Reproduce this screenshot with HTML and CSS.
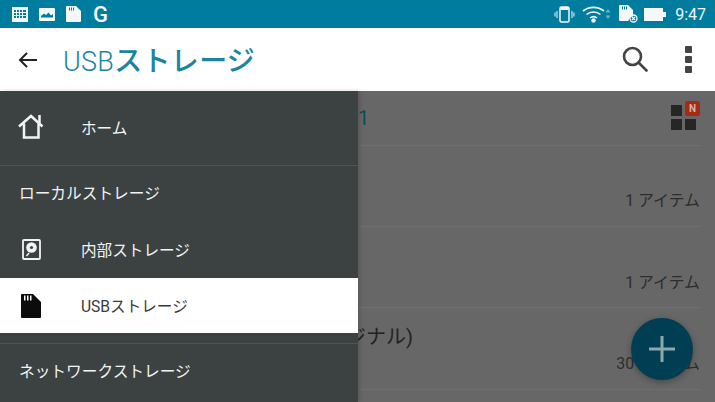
FILE: index.html
```html
<!DOCTYPE html>
<html lang="ja">
<head>
    <meta charset="UTF-8">
    <meta name="viewport" content="width=device-width, initial-scale=1.0">
    <title>USBストレージ</title>
    <link rel="stylesheet" href="styles.css">
</head>
<body>
    <div class="screen">
        <div class="status-bar">
            <div class="status-left">
                <svg width="16" height="16" viewBox="0 0 16 16"><path fill="#f4f8f9" fill-rule="evenodd" d="M0 1h16v15H0zM2 4v2h2V4zm3 0v2h2V4zm3 0v2h2V4zm3 0v2h3V4zM2 7v2h2V7zm3 0v2h2V7zm3 0v2h2V7zm3 0v2h3V7zM2 10v2h2v-2zm3 0v2h2v-2zm3 0v2h2v-2zm3 0v2h3v-2z"/></svg>
                <svg width="16" height="13" viewBox="0 0 16 13"><path fill="#f4f8f9" fill-rule="evenodd" d="M1 0h14a1 1 0 0 1 1 1v11a1 1 0 0 1-1 1H1a1 1 0 0 1-1-1V1a1 1 0 0 1 1-1zm1 9.500h12V6L12 7.500 9.500 4.500 7 7 5 5.500 2 8z"/></svg>
                <svg width="15" height="16" viewBox="0 0 15 16"><path fill="#f4f8f9" fill-rule="evenodd" d="M1 0h9l5 5v10a1 1 0 0 1-1 1H1a1 1 0 0 1-1-1V1a1 1 0 0 1 1-1zm2 1.500v3h1v-3zm2 0v3h1v-3zm2 0v3h1v-3z"/></svg>
                <span class="status-g">G</span>
            </div>
            <div class="status-right">
                <svg class="ic-phone" width="21" height="17" viewBox="0 0 20 17"><g fill="none" stroke="#f4f8f9"><rect x="5.500" y="1" width="9" height="15" rx="1.500" stroke-width="1.500"/><path d="M2.500 5v7M.5 6.500v4M17.500 5v7M19.500 6.500v4"/></g><path fill="#f4f8f9" d="M6 1h8v3H6z"/></svg>
                <svg class="ic-wifi" width="29" height="18" viewBox="0 0 29 18"><g fill="none" stroke="#f4f8f9" stroke-width="1.600"><path d="M1 6a17 17 0 0 1 21 0"/><path d="M4.500 9.500a11 11 0 0 1 14 0"/><path d="M8 13a5.500 5.500 0 0 1 7 0"/></g><circle cx="11.500" cy="15.500" r="2.200" fill="#f4f8f9"/><path fill="#6fb2c6" d="M26 4l2.500 3.500h-5zM26 14l-2.500-3.500h5z"/></svg>
                <svg class="ic-sd" width="20" height="18" viewBox="0 0 20 18"><path fill="#f4f8f9" fill-rule="evenodd" d="M1 0h8l5 5v6.500A5 5 0 0 0 9.500 16H1a1 1 0 0 1-1-1V1a1 1 0 0 1 1-1zm2 1.500v3h1v-3zm2 0v3h1v-3zm2 0v3h1v-3z"/><circle cx="14.500" cy="13.500" r="3.500" fill="none" stroke="#f4f8f9" stroke-width="1.300"/><path stroke="#f4f8f9" stroke-width="1.200" d="M13 12l3 3m0-3l-3 3"/></svg>
                <svg class="ic-battery" width="22" height="13" viewBox="0 0 22 13"><path fill="#f4f8f9" d="M0 0h19v13H0zM19 4h3v5h-3z"/></svg>
                <span class="clock">9:47</span>
            </div>
        </div>

        <header class="app-bar">
            <svg class="back" width="20" height="18" viewBox="0 0 20 18"><path fill="none" stroke="#222" stroke-width="2" d="M19 9H2M9 2L2 9l7 7"/></svg>
            <h1 class="title"><span class="title-latin">USB</span>ストレージ</h1>
            <svg class="search" width="26" height="26" viewBox="0 0 26 26"><g fill="none" stroke="#444" stroke-width="2.600"><circle cx="10.500" cy="10.500" r="8.500"/><path d="M16.500 16.500L24.500 24.500" stroke-linecap="round"/></g></svg>
            <div class="more"><i></i><i></i><i></i></div>
        </header>

        <main class="content">
            <div class="path-row">
                <span class="path-name">1</span>
                <div class="view-icon">
                    <i></i><b>N</b><i></i><i></i>
                </div>
            </div>
            <div class="file-row"><span class="file-meta">1 アイテム</span></div>
            <div class="file-row"><span class="file-meta">1 アイテム</span></div>
            <div class="file-row">
                <span class="file-name">ジナル)</span>
                <span class="file-meta">30 アイテム</span>
            </div>
        </main>

        <nav class="drawer">
            <a class="nav-item nav-home">
                <svg class="nav-icon" width="26" height="25" viewBox="0 0 26 25"><path fill="none" stroke="#f2f4f4" stroke-width="2.500" d="M1 12.500L13 2l11.500 10.500M21.500 10V1M6 9.500V23.500h14.500V9.500"/></svg>
                <span>ホーム</span>
            </a>
            <div class="nav-label">ローカルストレージ</div>
            <a class="nav-item nav-storage">
                <svg class="nav-icon" width="19" height="21" viewBox="0 0 19 21"><rect x="1" y="1" width="17" height="19" rx="1" fill="none" stroke="#f2f4f4" stroke-width="1.800"/><circle cx="9.500" cy="8.500" r="5.300" fill="#f2f4f4"/><circle cx="9.500" cy="8.500" r="1.600" fill="#3c4142"/><path stroke="#f2f4f4" stroke-width="1.500" d="M4.500 17l2.500-3"/></svg>
                <span>内部ストレージ</span>
            </a>
            <a class="nav-item nav-active">
                <svg class="nav-icon" width="20" height="24" viewBox="0 0 20 24"><path fill="#0c0c0c" fill-rule="evenodd" d="M1 0h11l8 8v15a1 1 0 0 1-1 1H1a1 1 0 0 1-1-1V1a1 1 0 0 1 1-1zm2 1.500v5h1.500v-5zm3 0v5h1.500v-5zm3 0v5h1.500v-5z"/></svg>
                <span>USBストレージ</span>
            </a>
            <div class="nav-label nav-label-network">ネットワークストレージ</div>
        </nav>

        <div class="fab">
            <svg width="26" height="26" viewBox="0 0 26 26"><path stroke="#8fa6ad" stroke-width="3" d="M13 0v26M0 13h26"/></svg>
        </div>
    </div>
</body>
</html>
```

FILE: styles.css
```css
* {
  box-sizing: border-box;
}

html, body {
  margin: 0;
  height: 100%;
}

body {
  font-family: Roboto, "Noto Sans CJK JP", sans-serif;
  overflow: hidden;
}

.screen {
  position: relative;
  width: 715px;
  height: 402px;
  overflow: hidden;
  background: #676767;
}

.status-bar {
  height: 28px;
  background: #007c9e;
  display: flex;
  justify-content: space-between;
  align-items: center;
  padding: 0 9px 0 12px;
}

.status-left, .status-right {
  display: flex;
  align-items: center;
}

.status-left {
  gap: 11px;
}

.status-left svg:nth-child(3) {
  margin-right: 1px;
}

.status-g {
  color: #f4f8f9;
  font-size: 22px;
  font-weight: 500;
  line-height: 1;
  margin-top: 2px;
}

.ic-phone {
  margin-right: 7px;
}

.ic-wifi {
  margin-right: 8px;
}

.ic-sd {
  margin-right: 5px;
}

.ic-battery {
  margin-right: 9px;
}

.clock {
  color: #eef5f7;
  font-size: 16px;
}

.app-bar {
  height: 63px;
  background: #fff;
  display: flex;
  align-items: center;
  padding: 0 23px 0 18px;
}

.title {
  margin: 0 0 2px 25px;
  flex: 1;
  color: #1a84a3;
  font-size: 28px;
  font-weight: 500;
  letter-spacing: 0.3px;
}

.title-latin {
  font-size: 27px;
  font-weight: 300;
}

.search {
  margin-top: -1px;
}

.more {
  display: flex;
  flex-direction: column;
  gap: 3px;
  margin-left: 37px;
}

.more i {
  width: 7px;
  height: 7px;
  border-radius: 1px;
  background: #444;
}

.content {
  padding-left: 358px;
}

.path-row, .file-row {
  margin-right: 15px;
  border-bottom: 1px solid #6f6f6f;
}

.path-row {
  height: 55px;
  display: flex;
  justify-content: space-between;
  align-items: center;
}

.path-name {
  color: #0d4a5c;
  font-size: 20px;
}

.view-icon {
  display: grid;
  grid-template-columns: 11px 15px;
  gap: 3px;
  align-items: end;
  margin-bottom: 5px;
}

.view-icon i {
  width: 11px;
  height: 11px;
  background: #262626;
}

.view-icon b {
  width: 15px;
  height: 15px;
  background: #a82a12;
  border-radius: 2px;
  color: #d8b0a8;
  font-size: 10px;
  line-height: 15px;
  text-align: center;
}

.file-row {
  height: 81px;
  position: relative;
  display: flex;
  justify-content: flex-end;
  padding-top: 46px;
}

.file-row:nth-child(3) {
  padding-top: 47px;
}

.file-row:nth-child(4) {
  height: 82px;
  padding-top: 47px;
}

.file-meta {
  color: #2d2d2d;
  font-size: 15.900px;
  line-height: 18px;
}

.file-name {
  position: absolute;
  left: -12px;
  top: 15px;
  color: #222;
  font-size: 20px;
  line-height: 28px;
}

.drawer {
  position: absolute;
  left: 0;
  top: 91px;
  bottom: 0;
  width: 358px;
  background: #3c4142;
  color: #f2f4f4;
  font-size: 15.600px;
  box-shadow: 2px 0 4px rgba(0, 0, 0, 0.15);
}

.nav-item {
  display: flex;
  align-items: center;
  height: 55px;
}

.nav-item span {
  margin-left: 81px;
}

.nav-icon {
  position: absolute;
  left: 18px;
}

.nav-home {
  height: 75px;
  padding-bottom: 2px;
  border-bottom: 1px solid #4f5454;
}

.nav-home .nav-icon {
  margin-top: -2px;
}

.nav-label {
  height: 56px;
  padding-left: 19px;
  line-height: 56px;
  font-size: 15.700px;
}

.nav-storage {
  height: 56px;
  padding-bottom: 2px;
}

.nav-storage .nav-icon {
  left: 22px;
}

.nav-active {
  background: #fff;
  color: #3a3a3a;
  padding-bottom: 2px;
}

.nav-active .nav-icon {
  left: 21px;
  margin-top: 2px;
}

.nav-label-network {
  margin-top: 10px;
  border-top: 1px solid #4f5454;
}

.fab {
  position: absolute;
  left: 631px;
  top: 318px;
  width: 62px;
  height: 62px;
  border-radius: 50%;
  background: #003f53;
  box-shadow: 0 2px 6px rgba(0, 0, 0, 0.3);
  display: flex;
  justify-content: center;
  align-items: center;
}
```
